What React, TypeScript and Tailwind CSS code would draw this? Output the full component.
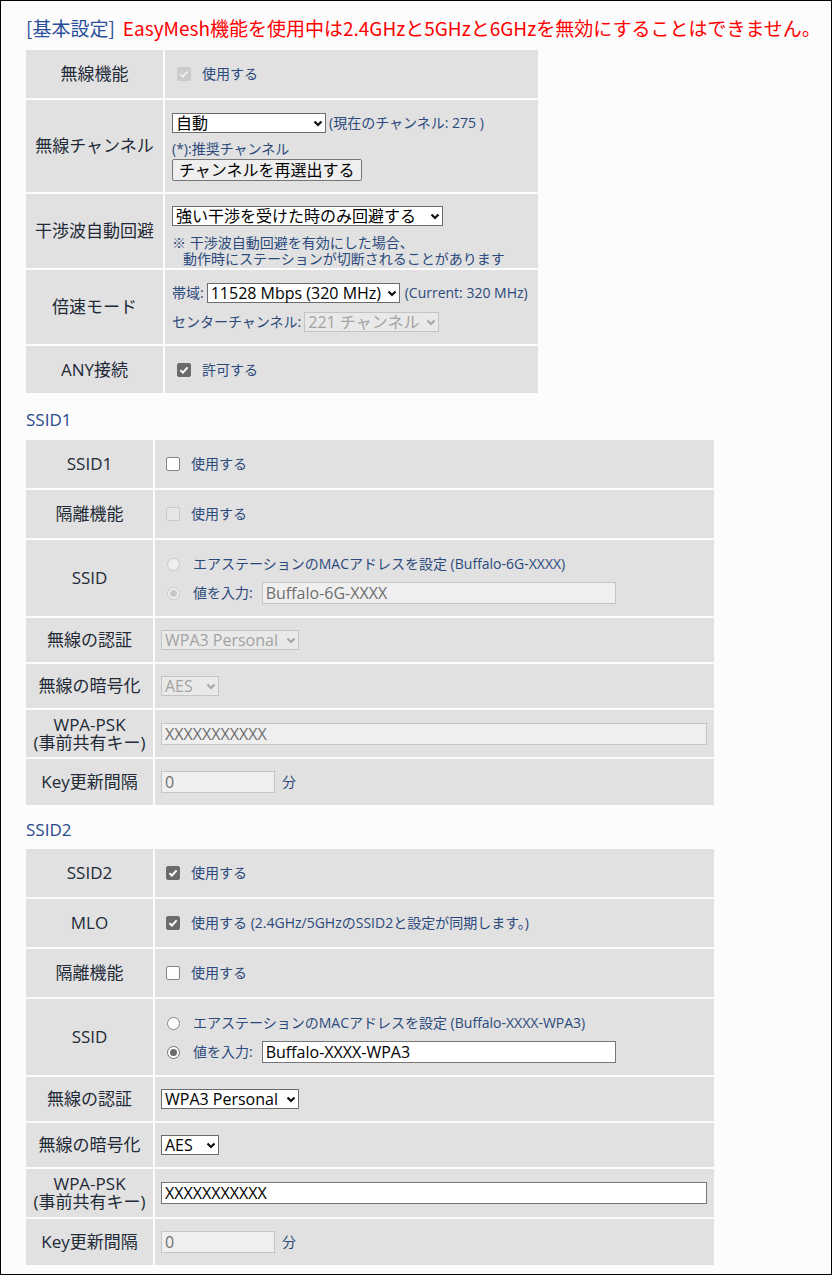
import React from "react";

// 無線設定 (6GHz) 画面
const BLUE = "text-[#2c4a7c]";
const LABEL = "text-[#222a37]";

type CB = "on" | "off" | "don" | "doff";

function Check({ s }: { s: CB }) {
  const box =
    s === "on"
      ? "bg-[#6b6b6b] border-[#6b6b6b]"
      : s === "off"
        ? "bg-white border-[#858585]"
        : s === "don"
          ? "bg-[#cbcbcb] border-[#cbcbcb]"
          : "bg-[#e6e6e6] border-[#c9c9c9]";
  return (
    <span
      className={`ml-[5px] mr-[11px] inline-flex h-[14px] w-[14px] shrink-0 items-center justify-center rounded-[2px] border ${box}`}
    >
      {(s === "on" || s === "don") && (
        <svg width="12" height="12" viewBox="0 0 12 12">
          <path
            d="M2.4 6.1 4.9 8.6 9.6 3.4"
            fill="none"
            stroke={s === "on" ? "#ffffff" : "#ededed"}
            strokeWidth="2"
          />
        </svg>
      )}
    </span>
  );
}

function Radio({ on, dis }: { on?: boolean; dis?: boolean }) {
  const ring = dis
    ? "border-[#c8c8c8] bg-[#efefef]"
    : on
      ? "border-[#707070] bg-white"
      : "border-[#858585] bg-white";
  const dot = dis ? "bg-[#c8c8c8]" : "bg-[#6b6b6b]";
  return (
    <span
      className={`ml-[6px] mr-[13px] inline-flex h-[13px] w-[13px] shrink-0 items-center justify-center rounded-full border ${ring}`}
    >
      {on && <span className={`h-[7px] w-[7px] rounded-full ${dot}`} />}
    </span>
  );
}

function Select({ w, dis, text }: { w: string; dis?: boolean; text: string }) {
  return (
    <span
      className={`inline-flex h-[20px] ${w} shrink-0 items-center justify-between border pl-[3px] pr-[2px] text-[16px] leading-none ${
        dis ? "border-[#c4c4c4] bg-[#e9e9e9] text-[#a3a3a3]" : "border-[#6c6c6c] bg-white text-black"
      }`}
    >
      <span className="whitespace-nowrap">{text}</span>
      <svg width="10" height="7" viewBox="0 0 10 7" className="shrink-0">
        <path
          d="M1.5 1.5 5 5 8.5 1.5"
          fill="none"
          stroke={dis ? "#a8a8a8" : "#111111"}
          strokeWidth="2.2"
        />
      </svg>
    </span>
  );
}

function Field({ w, dis, value }: { w: string; dis?: boolean; value: string }) {
  return (
    <span
      className={`inline-flex h-[22px] ${w} shrink-0 items-center border px-[3px] text-[16px] leading-none whitespace-nowrap ${
        dis ? "border-[#c4c4c4] bg-[#efefef] text-[#707070]" : "border-[#767676] bg-white text-black"
      }`}
    >
      {value}
    </span>
  );
}

function Row({
  lw,
  h,
  pad,
  label,
  top,
  children,
}: {
  lw: string;
  h: string;
  pad: string;
  label: React.ReactNode;
  top?: string;
  children: React.ReactNode;
}) {
  return (
    <div className={`flex gap-[2px] ${h}`}>
      <div
        className={`${lw} flex shrink-0 items-center justify-center bg-[#e1e1e1] text-center text-[17px] leading-[18px] ${LABEL}`}
      >
        {label}
      </div>
      <div
        className={`flex min-w-0 flex-1 flex-col bg-[#e1e1e1] ${pad} ${top ?? "justify-center"} text-[14px] leading-[16px] ${BLUE}`}
      >
        {children}
      </div>
    </div>
  );
}

const Line = ({ children, cls = "" }: { children: React.ReactNode; cls?: string }) => (
  <div className={`flex items-center whitespace-nowrap ${cls}`}>{children}</div>
);

const PskLabel = (
  <span>
    WPA-PSK
    <br />
    (事前共有キー)
  </span>
);

export default function App() {
  const t1 = { lw: "w-[137px]", pad: "pl-[7px]" };
  const t2 = { lw: "w-[127px]", pad: "pl-[6px]" };
  return (
    <div className="h-[1275px] w-[832px] border border-black bg-[#fcfcfc] px-[25px] pt-[15px] font-['Open_Sans','Noto_Sans_CJK_JP',sans-serif]">
      <h1 className="whitespace-nowrap text-[19px] leading-[24px] font-['Noto_Sans_CJK_JP',sans-serif]">
        <span className="text-[#2a4f9a]">[基本設定]</span>
        <span className="ml-[8px] text-[#ff0000]">
          EasyMesh機能を使用中は2.4GHzと5GHzと6GHzを無効にすることはできません。
        </span>
      </h1>

      <div className="mt-[10px] flex w-[512px] flex-col gap-[2px]">
        <Row {...t1} h="h-[48px]" label="無線機能">
          <Line>
            <Check s="don" />
            使用する
          </Line>
        </Row>
        <Row {...t1} h="h-[92px]" label="無線チャンネル" top="justify-start pt-[13px]">
          <Line>
            <Select w="w-[154px]" text="自動" />
            <span className="ml-[3px]">(現在のチャンネル: 275 )</span>
          </Line>
          <Line cls="mt-[8px]">(*):推奨チャンネル</Line>
          <Line cls="mt-[2px]">
            <span className="inline-flex h-[22px] items-center rounded-[2px] border border-[#767676] bg-[#efefef] px-[6px] text-[16px] leading-none text-black">
              チャンネルを再選出する
            </span>
          </Line>
        </Row>
        <Row {...t1} h="h-[74px]" label="干渉波自動回避" top="justify-start pt-[12px]">
          <Line>
            <Select w="w-[271px]" text="強い干渉を受けた時のみ回避する" />
          </Line>
          <div className="mt-[9px] whitespace-nowrap">※ 干渉波自動回避を有効にした場合、</div>
          <div className="whitespace-nowrap pl-[11px]">動作時にステーションが切断されることがあります</div>
        </Row>
        <Row {...t1} h="h-[74px]" label="倍速モード" top="justify-start pt-[13px]">
          <Line>
            帯域:
            <span className="ml-[3px] mr-[5px] inline-flex">
              <Select w="w-[193px]" text="11528 Mbps (320 MHz)" />
            </span>
            (Current: 320 MHz)
          </Line>
          <Line cls="mt-[9px]">
            センターチャンネル:
            <span className="ml-[3px] inline-flex">
              <Select w="w-[135px]" dis text="221 チャンネル" />
            </span>
          </Line>
        </Row>
        <Row {...t1} h="h-[47px]" label="ANY接続">
          <Line>
            <Check s="on" />
            許可する
          </Line>
        </Row>
      </div>

      <h2 className="mb-[8px] mt-[15px] text-[17px] leading-[24px] text-[#2a4a8a]">SSID1</h2>
      <div className="flex w-[688px] flex-col gap-[2px]">
        <Row {...t2} h="h-[48px]" label="SSID1">
          <Line>
            <Check s="off" />
            使用する
          </Line>
        </Row>
        <Row {...t2} h="h-[48px]" label="隔離機能">
          <Line>
            <Check s="doff" />
            使用する
          </Line>
        </Row>
        <Row {...t2} h="h-[76px]" label="SSID" top="justify-start pt-[16px]">
          <Line>
            <Radio dis />
            エアステーションのMACアドレスを設定 (Buffalo-6G-XXXX)
          </Line>
          <Line cls="mt-[10px]">
            <Radio dis on />
            値を入力:
            <span className="ml-[9px] inline-flex">
              <Field w="w-[354px]" dis value="Buffalo-6G-XXXX" />
            </span>
          </Line>
        </Row>
        <Row {...t2} h="h-[44px]" label="無線の認証">
          <Line>
            <Select w="w-[138px]" dis text="WPA3 Personal" />
          </Line>
        </Row>
        <Row {...t2} h="h-[44px]" label="無線の暗号化">
          <Line>
            <Select w="w-[58px]" dis text="AES" />
          </Line>
        </Row>
        <Row {...t2} h="h-[47px]" label={PskLabel}>
          <Line>
            <Field w="w-[546px]" dis value="XXXXXXXXXXX" />
          </Line>
        </Row>
        <Row {...t2} h="h-[46px]" label="Key更新間隔">
          <Line>
            <Field w="w-[114px]" dis value="0" />
            <span className="ml-[7px]">分</span>
          </Line>
        </Row>
      </div>

      <h2 className="mb-[7px] mt-[13px] text-[17px] leading-[24px] text-[#2a4a8a]">SSID2</h2>
      <div className="flex w-[688px] flex-col gap-[2px]">
        <Row {...t2} h="h-[48px]" label="SSID2">
          <Line>
            <Check s="on" />
            使用する
          </Line>
        </Row>
        <Row {...t2} h="h-[48px]" label="MLO">
          <Line>
            <Check s="on" />
            使用する (2.4GHz/5GHzのSSID2と設定が同期します。)
          </Line>
        </Row>
        <Row {...t2} h="h-[48px]" label="隔離機能">
          <Line>
            <Check s="off" />
            使用する
          </Line>
        </Row>
        <Row {...t2} h="h-[76px]" label="SSID" top="justify-start pt-[16px]">
          <Line>
            <Radio />
            エアステーションのMACアドレスを設定 (Buffalo-XXXX-WPA3)
          </Line>
          <Line cls="mt-[10px]">
            <Radio on />
            値を入力:
            <span className="ml-[9px] inline-flex">
              <Field w="w-[354px]" value="Buffalo-XXXX-WPA3" />
            </span>
          </Line>
        </Row>
        <Row {...t2} h="h-[44px]" label="無線の認証">
          <Line>
            <Select w="w-[138px]" text="WPA3 Personal" />
          </Line>
        </Row>
        <Row {...t2} h="h-[44px]" label="無線の暗号化">
          <Line>
            <Select w="w-[58px]" text="AES" />
          </Line>
        </Row>
        <Row {...t2} h="h-[48px]" label={PskLabel}>
          <Line>
            <Field w="w-[546px]" value="XXXXXXXXXXX" />
          </Line>
        </Row>
        <Row {...t2} h="h-[46px]" label="Key更新間隔">
          <Line>
            <Field w="w-[114px]" dis value="0" />
            <span className="ml-[7px]">分</span>
          </Line>
        </Row>
      </div>
    </div>
  );
}
